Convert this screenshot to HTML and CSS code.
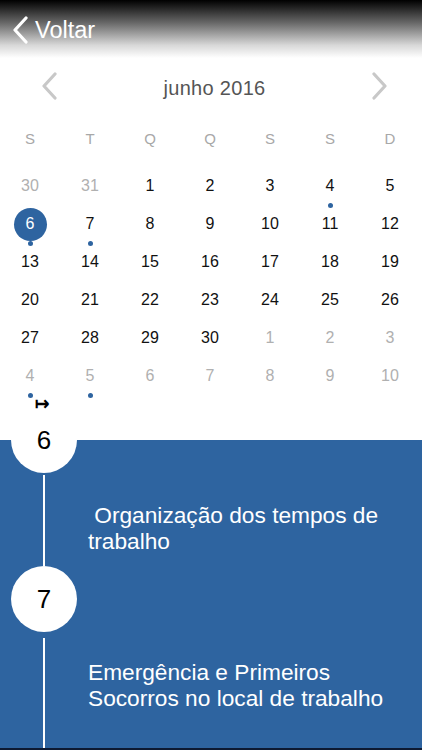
FILE: index.html
```html
<!DOCTYPE html>
<html lang="pt">
<head>
  <meta charset="UTF-8" />
  <meta name="viewport" content="width=device-width, initial-scale=1.0"/>
  <title>Calendário</title>
  <link rel="stylesheet" href="styles.css">
</head>
<body>
  <div class="topbar">
    <a class="back" href="#">
      <svg width="18" height="28" viewBox="0 0 18 28"><path d="M15 2 L4 14 L15 26" fill="none" stroke="#fff" stroke-width="3.2" stroke-linecap="round" stroke-linejoin="round"/></svg>
      <span>Voltar</span>
    </a>
  </div>

  <div class="month">
    <svg class="nav" width="18" height="28" viewBox="0 0 18 28"><path d="M15 2 L4 14 L15 26" fill="none" stroke="#c8c8c8" stroke-width="3.2" stroke-linecap="round" stroke-linejoin="round"/></svg>
    <span class="month-name">junho 2016</span>
    <svg class="nav" width="18" height="28" viewBox="0 0 18 28"><path d="M3 2 L14 14 L3 26" fill="none" stroke="#c8c8c8" stroke-width="3.2" stroke-linecap="round" stroke-linejoin="round"/></svg>
  </div>

  <div class="weekdays">
    <span>S</span><span>T</span><span>Q</span><span>Q</span><span>S</span><span>S</span><span>D</span>
  </div>

  <div class="days">
    <div class="day muted"><span>30</span></div>
    <div class="day muted"><span>31</span></div>
    <div class="day"><span>1</span></div>
    <div class="day"><span>2</span></div>
    <div class="day"><span>3</span></div>
    <div class="day event"><span>4</span></div>
    <div class="day"><span>5</span></div>

    <div class="day selected event"><span>6</span></div>
    <div class="day event"><span>7</span></div>
    <div class="day"><span>8</span></div>
    <div class="day"><span>9</span></div>
    <div class="day"><span>10</span></div>
    <div class="day"><span>11</span></div>
    <div class="day"><span>12</span></div>

    <div class="day"><span>13</span></div>
    <div class="day"><span>14</span></div>
    <div class="day"><span>15</span></div>
    <div class="day"><span>16</span></div>
    <div class="day"><span>17</span></div>
    <div class="day"><span>18</span></div>
    <div class="day"><span>19</span></div>

    <div class="day"><span>20</span></div>
    <div class="day"><span>21</span></div>
    <div class="day"><span>22</span></div>
    <div class="day"><span>23</span></div>
    <div class="day"><span>24</span></div>
    <div class="day"><span>25</span></div>
    <div class="day"><span>26</span></div>

    <div class="day"><span>27</span></div>
    <div class="day"><span>28</span></div>
    <div class="day"><span>29</span></div>
    <div class="day"><span>30</span></div>
    <div class="day muted"><span>1</span></div>
    <div class="day muted"><span>2</span></div>
    <div class="day muted"><span>3</span></div>

    <div class="day muted event"><span>4</span></div>
    <div class="day muted event"><span>5</span></div>
    <div class="day muted"><span>6</span></div>
    <div class="day muted"><span>7</span></div>
    <div class="day muted"><span>8</span></div>
    <div class="day muted"><span>9</span></div>
    <div class="day muted"><span>10</span></div>
  </div>

  <div class="handle"><span>&#8614;</span></div>

  <div class="timeline">
    <div class="entry">
      <div class="rail">
        <div class="node">6</div>
        <div class="stem"></div>
      </div>
      <div class="title">&nbsp;Organização dos tempos de trabalho</div>
    </div>
    <div class="entry last">
      <div class="rail">
        <div class="node">7</div>
        <div class="stem"></div>
      </div>
      <div class="title">Emergência e Primeiros Socorros no local de trabalho</div>
    </div>
  </div>
</body>
</html>
```

FILE: styles.css
```css
body {
  margin: 0;
  width: 422px;
  height: 750px;
  overflow: hidden;
  background: #fff;
  font-family: "Liberation Sans", Arial, sans-serif;
  display: flex;
  flex-direction: column;
}
.topbar {
  height: 58px;
  background: linear-gradient(#000 0%, #6a6a6a 40%, #d8d8d8 78%, #fff 100%);
}
.back {
  display: flex;
  align-items: center;
  gap: 6px;
  padding: 16px 0 0 11px;
  color: #fff;
  text-decoration: none;
  font-size: 23.5px;
}
.month {
  height: 60px;
  display: flex;
  align-items: center;
  justify-content: space-between;
  padding: 0 33px 4px 40px;
  box-sizing: border-box;
}
.month-name {
  font-size: 20px;
  color: #555;
  letter-spacing: 0.3px;
  padding-top: 4px;
}
.weekdays {
  height: 40px;
  display: grid;
  grid-template-columns: repeat(7, 60px);
  align-items: center;
  text-align: center;
  font-size: 15px;
  color: #a8a8a8;
}
.days {
  margin-top: 9px;
  display: grid;
  grid-template-columns: repeat(7, 60px);
  grid-auto-rows: 38px;
}
.day {
  position: relative;
  display: flex;
  align-items: center;
  justify-content: center;
  font-size: 16px;
  color: #111;
}
.day span {
  width: 33px;
  height: 33px;
  border-radius: 50%;
  display: flex;
  align-items: center;
  justify-content: center;
}
.day.muted {
  color: #b0b0b0;
}
.day.selected span {
  background: #2e64a0;
  color: #fff;
}
.day.event::after {
  content: "";
  position: absolute;
  left: 28px;
  top: 36px;
  width: 5px;
  height: 5px;
  border-radius: 50%;
  background: #2e64a0;
}
.handle {
  height: 45px;
}
.handle span {
  position: relative;
  z-index: 1;
  display: block;
  width: 16px;
  margin: 2px 0 0 35px;
  font-size: 17px;
  font-weight: bold;
  line-height: 16px;
  color: #000;
}
.timeline {
  flex: 1;
  display: flex;
  flex-direction: column;
  background: #2e64a0;
  border-bottom: 2px solid #0d1a33;
}
.entry {
  display: grid;
  grid-template-columns: 88px 1fr;
  height: 159px;
}
.entry:first-child {
  margin-top: -33px;
}
.entry.last {
  flex: 1;
}
.rail {
  display: flex;
  flex-direction: column;
  align-items: center;
}
.node {
  width: 66px;
  height: 66px;
  flex: none;
  border-radius: 50%;
  background: #fff;
  color: #000;
  font-size: 26px;
  display: flex;
  align-items: center;
  justify-content: center;
}
.stem {
  flex: 1;
  width: 2px;
  margin-top: 2px;
  background: #fff;
}
.entry.last .stem {
  margin-top: 6px;
}
.title {
  padding: 95px 20px 0 0;
  font-size: 22.7px;
  line-height: 26px;
  color: #fff;
}
.entry.last .title {
  padding-top: 93px;
}
```
